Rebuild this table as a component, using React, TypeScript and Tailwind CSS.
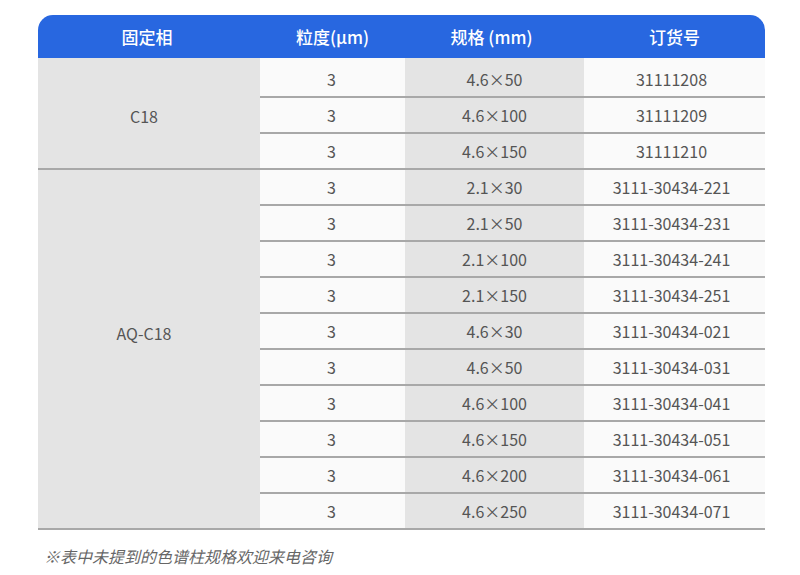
const groups = [
  {
    name: "C18",
    shift: "pt-[6px]",
    rows: [
      ["3", "4.6×50", "31111208"],
      ["3", "4.6×100", "31111209"],
      ["3", "4.6×150", "31111210"],
    ],
  },
  {
    name: "AQ-C18",
    shift: "pb-[32px]",
    rows: [
      ["3", "2.1×30", "3111-30434-221"],
      ["3", "2.1×50", "3111-30434-231"],
      ["3", "2.1×100", "3111-30434-241"],
      ["3", "2.1×150", "3111-30434-251"],
      ["3", "4.6×30", "3111-30434-021"],
      ["3", "4.6×50", "3111-30434-031"],
      ["3", "4.6×100", "3111-30434-041"],
      ["3", "4.6×150", "3111-30434-051"],
      ["3", "4.6×200", "3111-30434-061"],
      ["3", "4.6×250", "3111-30434-071"],
    ],
  },
];

const font = { fontFamily: '"Noto Sans CJK SC", "Noto Sans", sans-serif' };

export default function App() {
  return (
    <div className="w-[800px] h-[575px] bg-white pt-[15px] pl-[38px]" style={font}>
      <div className="w-[727px]">
        <div className="flex h-[43px] items-center rounded-t-[15px] bg-[#2867e0] text-[17px] font-medium text-white">
          <div className="w-[222px] text-center pr-[4px]">固定相</div>
          <div className="w-[145px] text-center">粒度(μm)</div>
          <div className="w-[179px] text-center pr-[6px]">规格 (mm)</div>
          <div className="flex-1 text-center">订货号</div>
        </div>

        {groups.map((g, gi) => (
          <div key={g.name} className="flex border-b-2 border-[#a8a8a8] text-[16px] text-[#555]">
            <div className={"flex w-[222px] items-center justify-center bg-[#e4e4e4] pr-[10px] " + g.shift}>
              {g.name}
            </div>
            <div className="flex flex-1 flex-col">
              {g.rows.map((r, ri) => {
                const first = gi === 0 && ri === 0;
                const last = ri === g.rows.length - 1;
                return (
                  <div
                    key={ri}
                    className={
                      "flex " +
                      (first ? "h-[40px] " : last ? "h-[34px] " : "h-[36px] ") +
                      (last ? "" : "border-b-2 border-[#a8a8a8]")
                    }
                  >
                    <div className={"flex w-[145px] items-center justify-center bg-[#fafafa] pr-[2px] " + (first ? "pt-[3px]" : "")}>
                      {r[0]}
                    </div>
                    <div className={"flex w-[179px] items-center justify-center bg-[#e4e4e4] " + (first ? "pt-[3px]" : "")}>
                      {r[1]}
                    </div>
                    <div className={"flex flex-1 items-center justify-center bg-[#fafafa] pr-[6px] " + (first ? "pt-[3px]" : "")}>
                      {r[2]}
                    </div>
                  </div>
                );
              })}
            </div>
          </div>
        ))}
      </div>

      <p className="mt-[14px] ml-[6px] text-[16px] italic text-[#666]">※表中未提到的色谱柱规格欢迎来电咨询</p>
    </div>
  );
}
